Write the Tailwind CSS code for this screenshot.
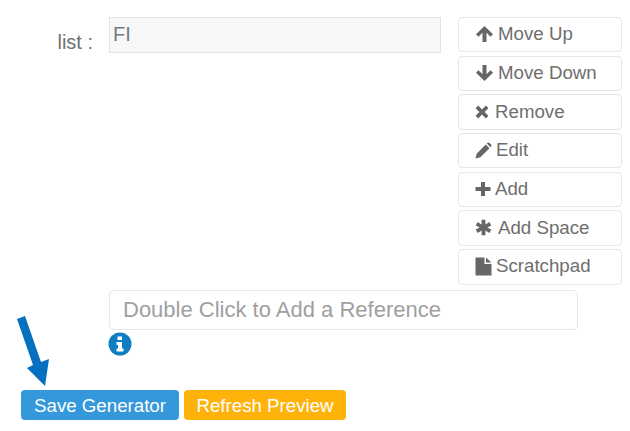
<!DOCTYPE html>
<html><head><script src="https://cdn.jsdelivr.net/npm/@tailwindcss/browser@4"></script></head>
<body class="bg-white">
<div class="relative w-[630px] h-[431px] overflow-hidden bg-white font-['Liberation_Sans',Arial,sans-serif] text-[18.7px] text-[#6e6e6e] pt-[17px]">
  <div class="flex items-start">
    <div class="w-[93px] text-right text-[#707070] text-[20px] pt-[12px] leading-[26px]">list :</div>
    <div class="ml-[16px] w-[332px] h-[36px] border border-[#e2e2e2] bg-[#f7f7f7] pl-[3px] text-[#6e7a88] text-[20px] leading-[32px]">FI</div>
    <div class="ml-[17px] w-[164px] flex flex-col gap-[3.3px]">
      <button class="h-[35.4px] flex items-center pl-[16px] pb-[1px] gap-[4px] border border-[#e6e6e6] rounded-[4px] bg-white">
        <svg class="w-[19px] h-[18px]" viewBox="0 0 18 18"><path d="M9 1 L17.5 9.3 L15 11.7 L11 7.8 V17 H7 V7.8 L3 11.7 L.5 9.3 Z" fill="#666"/></svg><span>Move Up</span></button>
      <button class="h-[35.4px] flex items-center pl-[16px] pb-[1px] gap-[4px] border border-[#e6e6e6] rounded-[4px] bg-white">
        <svg class="w-[19px] h-[18px]" viewBox="0 0 18 18"><path d="M9 17 L17.5 8.7 L15 6.3 L11 10.2 V1 H7 V10.2 L3 6.3 L.5 8.7 Z" fill="#666"/></svg><span>Move Down</span></button>
      <button class="h-[35.4px] flex items-center pl-[16px] pb-[1px] gap-[6px] border border-[#e6e6e6] rounded-[4px] bg-white">
        <svg class="w-[14px] h-[14px]" viewBox="0 0 14 14"><path d="M3.2 .6 L7 4.4 L10.8 .6 L13.4 3.2 L9.6 7 L13.4 10.8 L10.8 13.4 L7 9.6 L3.2 13.4 L.6 10.8 L4.4 7 L.6 3.2 Z" fill="#666"/></svg><span>Remove</span></button>
      <button class="h-[35.4px] flex items-center pl-[16px] pb-[1px] gap-[4px] border border-[#e6e6e6] rounded-[4px] bg-white">
        <svg class="w-[17px] h-[17px]" viewBox="0 0 17 17"><path d="M.5 16.5 L1.8 11.6 L10.8 2.6 L14.4 6.2 L5.4 15.2 Z M11.8 1.6 L13 .6 Q13.6 .2 14.2 .7 L16.3 2.8 Q16.8 3.4 16.3 4 L15.4 5.2 Z" fill="#666"/></svg><span>Edit</span></button>
      <button class="h-[35.4px] flex items-center pl-[16px] pb-[1px] gap-[4px] border border-[#e6e6e6] rounded-[4px] bg-white">
        <svg class="w-[16px] h-[16px]" viewBox="0 0 16 16"><path d="M6 1 H10 V6 H15.5 V10 H10 V15 H6 V10 H.5 V6 H6 Z" fill="#666"/></svg><span>Add</span></button>
      <button class="h-[35.4px] flex items-center pl-[16px] pb-[1px] gap-[6px] border border-[#e6e6e6] rounded-[4px] bg-white">
        <svg class="w-[17px] h-[17px]" viewBox="0 0 17 17"><path d="M6.6 .8 H10.4 V5.4 L14.4 3.1 L16.3 6.4 L12.3 8.5 L16.3 10.6 L14.4 13.9 L10.4 11.6 V16.2 H6.6 V11.6 L2.6 13.9 L.7 10.6 L4.7 8.5 L.7 6.4 L2.6 3.1 L6.6 5.4 Z" fill="#666"/></svg><span>Add Space</span></button>
      <button class="h-[35.4px] flex items-center pl-[16px] pb-[1px] gap-[4px] border border-[#e6e6e6] rounded-[4px] bg-white">
        <svg class="w-[17px] h-[19px]" viewBox="0 0 17 19"><path d="M.5 .5 H9.5 V7 H16.5 V18.5 H.5 Z M11 .5 L16.5 5.5 H11 Z" fill="#666"/></svg><span>Scratchpad</span></button>
    </div>
  </div>
  <div class="ml-[109px] mt-[5px] w-[469px] h-[40px] border border-[#e6e6e6] rounded-[5px] pl-[13px] text-[22px] leading-[37px] text-[#a0a0a0]">Double Click to Add a Reference</div>
  <svg class="ml-[108px] mt-[2px] w-[24px] h-[24px]" viewBox="0 0 24 24"><circle cx="12" cy="12" r="11.5" fill="#0f7dc2"/><path d="M9.5 4.5 H14 V8 H9.5 Z M8.5 10 H14 V16.5 H15.5 V19.5 H8.5 V16.5 H10 V13 H8.5 Z" fill="#fff"/></svg>
  <div class="ml-[21px] mt-[34px] flex gap-[5px] text-white">
    <button class="w-[158px] h-[30px] pt-[2px] rounded-[4px] bg-[#3498db] text-center">Save Generator</button>
    <button class="w-[162px] h-[30px] pt-[2px] rounded-[4px] bg-[#ffb30a] text-center">Refresh Preview</button>
  </div>
  <svg class="absolute left-[15px] top-[315px] w-[40px] h-[72px]" viewBox="0 0 40 72"><path d="M2 4 L10 1 L26 47 L34 44 L30 71 L12 53 L18 50 Z" fill="#0670c0"/></svg>
</div>
</body></html>
